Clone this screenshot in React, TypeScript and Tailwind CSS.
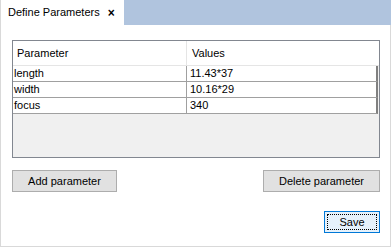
import React from 'react';

const rows = [
    { name: 'length', value: '11.43*37' },
    { name: 'width', value: '10.16*29' },
    { name: 'focus', value: '340' },
];

export default function App() {
    return (
        <div
            className="w-[391px] h-[247px] flex flex-col bg-white text-[11px] text-black"
            style={{ fontFamily: '"Liberation Sans", Arial, sans-serif' }}
        >
            <div className="h-[25px] flex bg-[#b0c4de]">
                <div className="w-[124px] bg-white border-l border-[#d9d9d9] flex items-center pl-[7px]">
                    <span className="leading-none">Define Parameters</span>
                    <span className="ml-[8px] text-[12px] font-bold leading-none">×</span>
                </div>
            </div>

            <div className="flex-1 flex flex-col border-l border-r border-b border-[#d9d9d9] pl-[11px] pr-[10px] pt-[15px]">
                <div className="h-[118px] border border-[#828790] bg-[#f0f0f0] flex flex-col">
                    <div className="h-[25px] bg-white flex border-b border-[#e5e5e5]">
                        <div className="w-[174px] border-r border-[#e5e5e5] flex items-center pl-[4px]">Parameter</div>
                        <div className="flex-1 flex items-center pl-[5px]">Values</div>
                    </div>
                    {rows.map(r => (
                        <div key={r.name} className="h-[16px] bg-white flex border-b border-[#a0a0a0] mr-[1px] border-r-2 border-r-[#808080]">
                            <div className="w-[174px] border-r border-[#a0a0a0] flex items-center pl-[1px]">{r.name}</div>
                            <div className="flex-1 flex items-center pl-[3px]">{r.value}</div>
                        </div>
                    ))}
                </div>

                <div className="mt-[12px] flex justify-between">
                    <button className="w-[105px] h-[22px] bg-[#e1e1e1] border border-[#adadad] text-[11px]">Add parameter</button>
                    <button className="w-[117px] h-[22px] bg-[#e1e1e1] border border-[#adadad] text-[11px]">Delete parameter</button>
                </div>

                <div className="mt-[19px] flex justify-end">
                    <button className="w-[56px] h-[22px] bg-[#e5f1fb] border border-[#0078d7] p-[2px] text-[11px]">
                        <div className="w-full h-full border border-dotted border-black flex items-center justify-center">Save</div>
                    </button>
                </div>
            </div>
        </div>
    );
}
